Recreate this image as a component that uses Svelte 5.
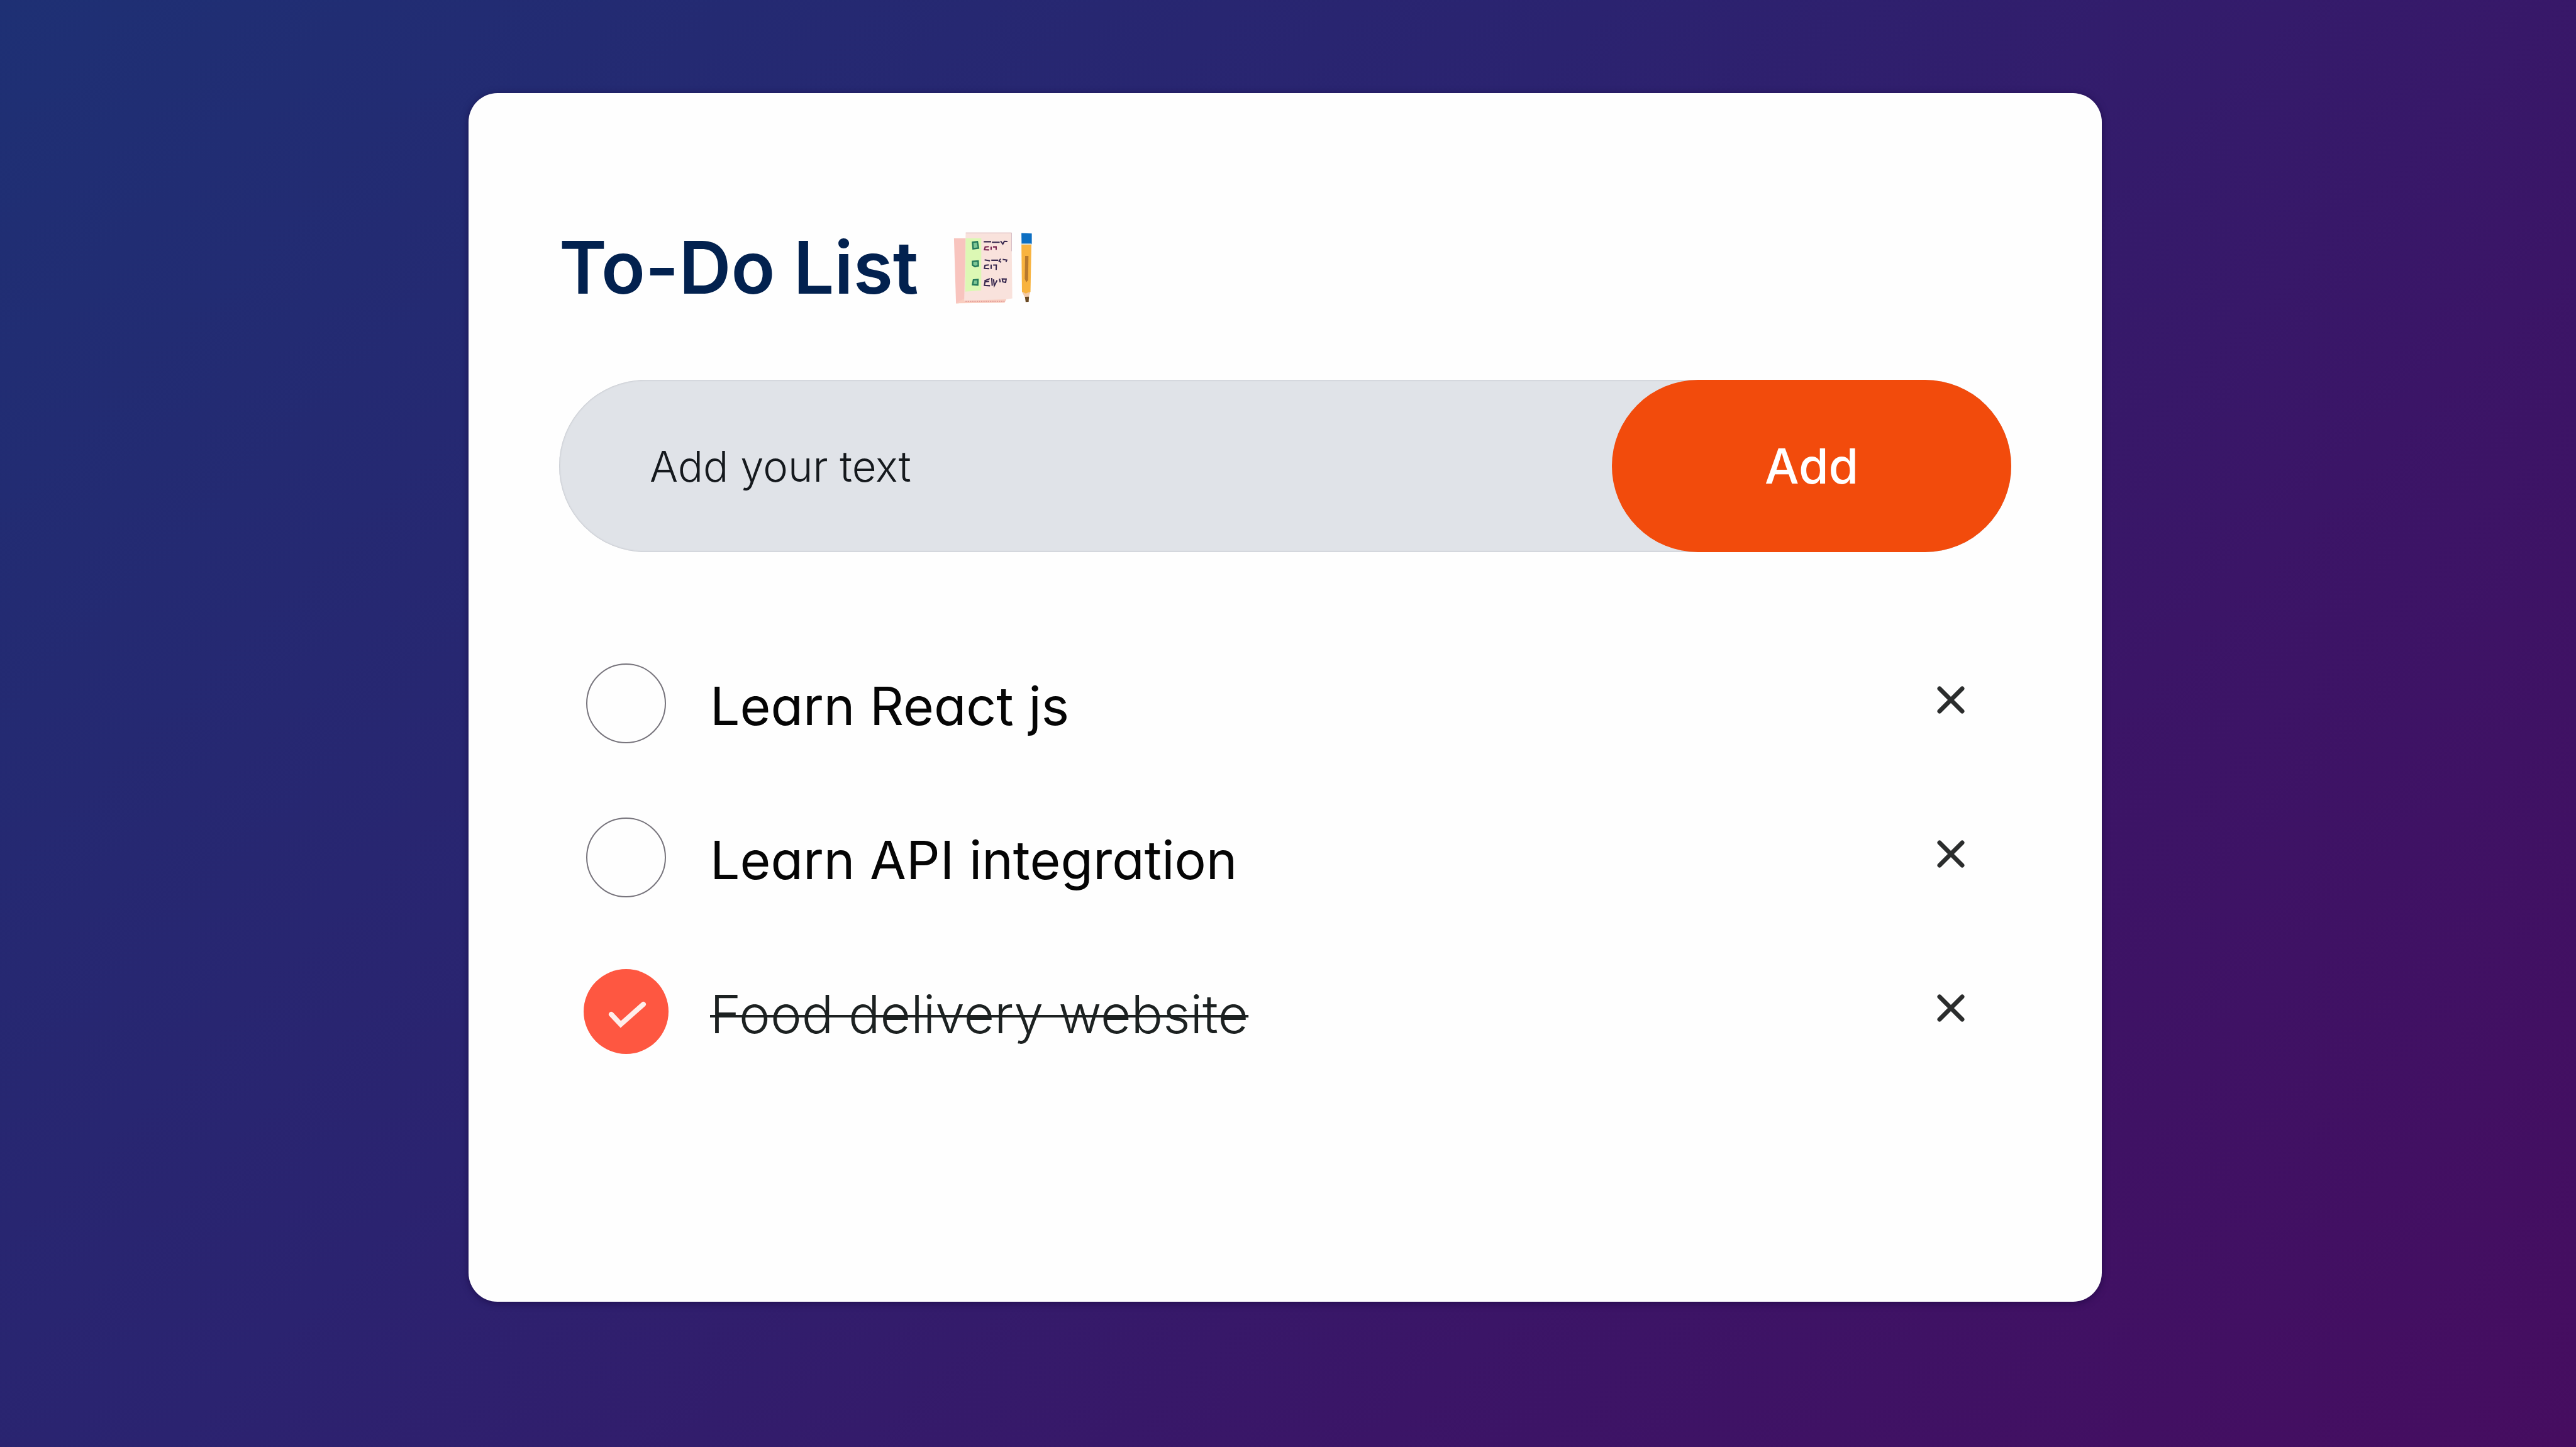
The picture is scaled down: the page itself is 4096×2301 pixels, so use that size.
<script>
  let draft = $state('');
  let items = $state([
    { id: 1, text: 'Learn React js', done: false },
    { id: 2, text: 'Learn API integration', done: false },
    { id: 3, text: 'Food delivery website', done: true }
  ]);
  let nextId = 4;

  function add(event) {
    event.preventDefault();
    const text = draft.trim();
    if (!text) return;
    items.push({ id: nextId++, text, done: false });
    draft = '';
  }

  function remove(id) {
    items = items.filter((item) => item.id !== id);
  }
</script>

<main class="page">
  <section class="card">
    <header class="title">
      <h1>To-Do List</h1>
      <svg class="notes" viewBox="150 108 430 392" aria-hidden="true">
        <path d="M153 145 H225 V490 L164 495 Z" fill="#f8c4be" />
        <path d="M164 495 L205 470 L437 470 L425 492 Z" fill="#f9cdbf" />
        <path d="M216 113 H463 L467 468 L437 473 L208 480 Z" fill="#f9e2dc" />
        <path d="M217 116 H463 V214" fill="none" stroke="#cdb3bd" stroke-width="3" />
        <path d="M216 145 H300 V425 L214 432 Z" fill="#dcf8b4" />
        <path d="M215 484 H425" stroke="#e2a09c" stroke-width="5" stroke-dasharray="7 5" />
        <g fill="#7fc795" stroke="#23795a" stroke-width="8">
          <path d="M253 166 L279 163 L285 197 L256 201 Z" />
          <path d="M253 269 L283 267 L284 293 L266 297 L253 289 Z" />
          <path d="M258 369 L282 367 L281 396 L253 394 Z" />
        </g>
        <g fill="none" stroke="#38294f" stroke-width="7">
          <path d="M313 163 H353 M357 166 H399 M404 160 L416 176 L424 161 L441 162" />
          <path d="M318 261 L347 266 M354 263 H391 M404 255 L396 267 L407 274 M415 258 L437 262 L433 272" />
          <path d="M341 288 L320 290 L317 307 L343 308 M353 286 V310 M364 289 H381 L380 315" />
          <path d="M317 374 L346 362 M343 377 L320 379 L317 398 L347 400 M356 358 L359 400 M366 365 L370 400 L385 371 M398 362 L402 382 M413 363 L434 364 L431 382 L416 379 Z" />
        </g>
        <path d="M341 190 L321 191 L317 206 L342 207 M353 190 V207 M363 191 H380 V207" fill="none" stroke="#78234f" stroke-width="7" />
        <path d="M516 174 H570 L565 432 L555 455 H535 L519 432 Z" fill="#f8b33f" />
        <path d="M536 240 H554 L552 370 L542 382 L534 362 Z" fill="#b8792d" />
        <path d="M519 432 L540 442 L563 432 L556 462 H534 Z" fill="#f2c9a5" />
        <path d="M535 460 L557 459 L555 487 L539 488 Z" fill="#6b4a23" />
        <path d="M516 117 L572 119 V176 H517 Z" fill="#0d6fc2" />
        <path d="M516 176 H570" stroke="#dfe5de" stroke-width="6" />
      </svg>
    </header>

    <form class="entry" onsubmit={add}>
      <input type="text" aria-label="Add your text" placeholder="Add your text" bind:value={draft} />
      <button type="submit">Add</button>
    </form>

    <ul class="list">
      {#each items as item (item.id)}
        <li>
          <label>
            <span class="slot">
              <input type="checkbox" bind:checked={item.done} />
              <svg class="tick" viewBox="0 0 135 135" aria-hidden="true">
                <path d="M44 72 L59 88 L95 56" />
              </svg>
            </span>
            <span class="text">{item.text}</span>
          </label>
          <button type="button" class="remove" aria-label="Remove {item.text}" onclick={() => remove(item.id)}>
            <svg viewBox="0 0 44 44" aria-hidden="true">
              <path d="M4 4 L40 40 M40 4 L4 40" />
            </svg>
          </button>
        </li>
      {/each}
    </ul>
  </section>
</main>

<style>
  :global(body) {
    margin: 0;
  }

  .page {
    box-sizing: border-box;
    min-height: 100vh;
    display: flex;
    padding: 148px 754px 231px 745px;
    background: linear-gradient(135deg, #1e3074, #2b2370 40%, #3b1567 70%, #460d60);
    font-family: Inter, 'Open Sans', sans-serif;
    font-feature-settings: 'cv11';
    color: #050505;
  }

  .card {
    flex: 1;
    box-sizing: border-box;
    padding: 208px 144px 144px;
    border-radius: 46px;
    background: #fefefe;
    box-shadow: 0 2px 12px rgba(20, 5, 60, 0.6);
  }

  .title {
    display: flex;
    align-items: center;
    gap: 56px;
    height: 140px;
  }

  h1 {
    margin: 0;
    font-size: 115px;
    line-height: 140px;
    font-weight: 600;
    color: #02214f;
  }

  .notes {
    width: 127px;
    height: 116px;
  }

  .entry {
    display: flex;
    margin-top: 108px;
    border-radius: 137px;
    background: #e0e3e8;
    box-shadow: inset 0 0 3px #b0b3ba;
  }

  .entry input {
    flex: 1;
    min-width: 0;
    padding: 0 0 0 144px;
    border: 0;
    outline: 0;
    background: none;
    font: inherit;
    font-size: 67px;
    font-weight: 300;
    color: #15191d;
  }

  .entry input::placeholder {
    color: #15191d;
    opacity: 1;
  }

  .entry button {
    width: 635px;
    height: 274px;
    border: 0;
    border-radius: 137px;
    background: #f24b0c;
    font: inherit;
    font-size: 77px;
    font-weight: 500;
    color: #fff;
  }

  .list {
    margin: 118px 0 0;
    padding: 0 74px 0 39px;
    list-style: none;
  }

  li {
    display: flex;
    align-items: center;
    justify-content: space-between;
    height: 245px;
  }

  label {
    display: flex;
    align-items: center;
    gap: 66px;
  }

  .slot {
    display: grid;
    place-items: center;
    width: 135px;
    height: 135px;
  }

  .slot > * {
    grid-area: 1 / 1;
  }

  .slot input {
    appearance: none;
    box-sizing: border-box;
    width: 127px;
    height: 127px;
    margin: 0;
    border: 2px solid #77747c;
    border-radius: 50%;
  }

  .slot input:checked {
    width: 135px;
    height: 135px;
    border: 0;
    background: #fe5741;
  }

  .tick {
    display: none;
    width: 135px;
    height: 135px;
    fill: none;
    stroke: #ffeeea;
    stroke-width: 8;
    stroke-linecap: round;
    pointer-events: none;
  }

  input:checked + .tick {
    display: block;
  }

  .text {
    padding-top: 8px;
    font-size: 84px;
    line-height: 100px;
  }

  label:has(input:checked) .text {
    font-weight: 300;
    color: #1c2121;
    text-decoration: line-through;
    text-decoration-thickness: 4px;
  }

  .remove {
    padding: 0 0 12px;
    border: 0;
    background: none;
  }

  .remove svg {
    display: block;
    width: 44px;
    height: 44px;
    fill: none;
    stroke: #2b2d2d;
    stroke-width: 7;
    stroke-linecap: round;
  }
</style>
